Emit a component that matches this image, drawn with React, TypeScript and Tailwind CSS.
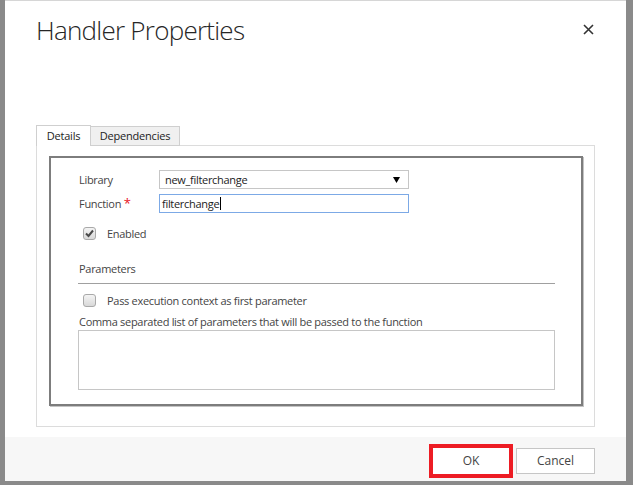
import React from "react";

const font = { fontFamily: '"Open Sans", "Noto Sans", sans-serif' };

function CheckBox({ checked }: { checked: boolean }) {
  return (
    <span className="relative inline-flex h-[13px] w-[13px] items-center justify-center rounded-[3px] border border-[#a9a9a9] bg-gradient-to-b from-[#f4f4f4] to-[#d9d9d9]">
      {checked && (
        <svg width="11" height="11" viewBox="0 0 11 11" className="absolute">
          <path d="M2 5.5 L4.5 8 L9 2.5" fill="none" stroke="#4a4a4a" strokeWidth="2" />
        </svg>
      )}
    </span>
  );
}

export default function App() {
  return (
    <div className="flex h-[485px] w-[633px] bg-[#8a8a8a] pl-[5px]" style={font}>
      <div className="flex h-[481px] w-[621px] flex-col border-t border-[#d6d6d6] bg-white">
        {/* header */}
        <div className="relative h-[124px] shrink-0">
          <div className="pl-[31px] pt-[12px] text-[26px] font-light leading-[34px] tracking-[-0.75px] text-[#262626]">
            Handler Properties
          </div>
          <button className="absolute left-[577px] top-[22px] flex h-[12px] w-[12px] items-center justify-center">
            <svg width="11" height="11" viewBox="0 0 11 11">
              <path d="M1 1 L10 10 M10 1 L1 10" stroke="#333" strokeWidth="1.6" />
            </svg>
          </button>
        </div>

        {/* tabs */}
        <div className="px-[31px]">
          <div className="relative z-10 flex h-[21px] items-end text-[11px] tracking-[-0.2px] text-[#222]">
            <div className="flex h-[21px] w-[55px] items-center justify-center border border-b-0 border-[#cfcfcf] bg-white">
              Details
            </div>
            <div className="flex h-[20px] w-[89px] items-center justify-center border border-l-0 border-[#cfcfcf] bg-[#f0f0f0]">
              Dependencies
            </div>
          </div>
          <div className="-mt-px h-[282px] border border-[#dcdcdc] pl-[12px] pr-[11px] pt-[10px]">
            <div className="h-[250px] border-2 border-[#7d7d7d] shadow-[1px_1px_0_#c4c4c4] pl-[27px] pr-[26px] pt-[12px] text-[11px] leading-[15px] tracking-[-0.3px] text-[#444]">
              <div className="flex items-center">
                <span className="w-[81px] pl-px">Library</span>
                <div className="relative flex h-[19px] w-[250px] items-center border border-[#c6c6c6] pl-[5px] text-[#222]">
                  new_filterchange
                  <svg width="7" height="6" viewBox="0 0 7 6" className="absolute right-[8px] top-[6px]">
                    <path d="M0 0 H7 L3.5 6 Z" fill="#000" />
                  </svg>
                </div>
              </div>
              <div className="mt-[5px] flex items-center">
                <span className="w-[81px] pl-px">
                  Function <span className="text-[13px] text-[#e81123]">*</span>
                </span>
                <div className="flex h-[19px] w-[250px] items-center border border-[#7ca9e6] pl-[2px] text-[#222]">
                  filterchange<span className="ml-px inline-block h-[13px] w-px bg-black" />
                </div>
              </div>
              <div className="mt-[13px] flex items-center pl-[5px]">
                <CheckBox checked />
                <span className="ml-[11px]">Enabled</span>
              </div>
              <div className="mt-[20px] pl-px">Parameters</div>
              <div className="mt-[7px] h-px bg-[#a0a0a0]" />
              <div className="mt-[9px] flex items-center pl-[5px]">
                <CheckBox checked={false} />
                <span className="ml-[11px]">Pass execution context as first parameter</span>
              </div>
              <div className="mt-[6px] pl-px">
                Comma separated list of parameters that will be passed to the function
              </div>
              <div className="mt-[1px] h-[60px] border border-[#c6c6c6]" />
            </div>
          </div>
        </div>

        {/* footer */}
        <div className="mt-auto flex h-[44px] items-start justify-end gap-[3px] bg-[#f7f7f7] pr-[31px] pt-[7px] text-[12px] text-[#444]">
          <div className="border-4 border-[#ed1c24]">
            <button className="flex h-[26px] w-[76px] items-center justify-center bg-white">OK</button>
          </div>
          <button className="mt-[4px] flex h-[26px] w-[79px] items-center justify-center border border-[#c6c6c6] bg-white">
            Cancel
          </button>
        </div>
      </div>
    </div>
  );
}
